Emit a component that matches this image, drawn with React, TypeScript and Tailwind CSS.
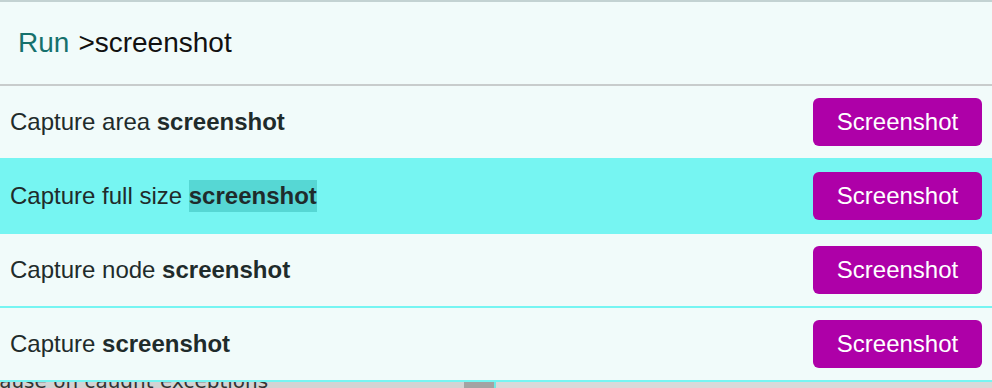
import React from "react";

const rows = [
  { pre: "Capture area ", active: false },
  { pre: "Capture full size ", active: true },
  { pre: "Capture node ", active: false },
  { pre: "Capture ", active: false },
];

export default function App() {
  return (
    <div className="w-[992px] h-[388px] overflow-hidden bg-[#d6d6d6]" style={{ fontFamily: '"Liberation Sans", Arial, sans-serif' }}>
      <div className="bg-[#f1fbfa] border-t-2 border-[#c3d2d2]">
        <div className="h-[84px] flex items-center pl-[18px] text-[28px] leading-none border-b-2 border-[#c8cccc]">
          <span className="text-[#16716d]">Run</span>
          <span className="text-[#111111] ml-[9px]">&gt;screenshot</span>
        </div>
        {rows.map((r, i) => (
          <div
            key={i}
            className={
              r.active
                ? "h-[76px] flex items-center justify-between pl-[10px] pr-[10px] bg-[#76f5f2]"
                : i === 0
                ? "h-[72px] flex items-center justify-between pl-[10px] pr-[10px]"
                : "h-[74px] flex items-center justify-between pl-[10px] pr-[10px] border-b-2 border-[#76f5f2]"
            }
          >
            <div className="text-[24px] leading-none text-[#1f2b2b] flex items-center">
              <span className="whitespace-pre">{r.pre}</span>
              <span className={r.active ? "font-bold bg-[#56d7d4] py-[4px]" : "font-bold"}>screenshot</span>
            </div>
            <button className="h-[48px] w-[169px] rounded-[6px] bg-[#ae00a8] text-white text-[24px] leading-none">
              Screenshot
            </button>
          </div>
        ))}
      </div>
      <div className="h-[6px] overflow-hidden flex">
        <div className="w-[464px] bg-[#d3d3d3] overflow-hidden">
          <div className="-mt-[11px] -ml-[12px] text-[20px] leading-none text-[#333333] whitespace-nowrap" style={{ fontFamily: '"DejaVu Sans", sans-serif' }}>
            Pause on caught exceptions
          </div>
        </div>
        <div className="w-[30px] bg-[#a3a3a3]" />
        <div className="w-[2px] bg-[#6fe9e6]" />
        <div className="flex-1 bg-[#d9d9d9]" />
      </div>
    </div>
  );
}
